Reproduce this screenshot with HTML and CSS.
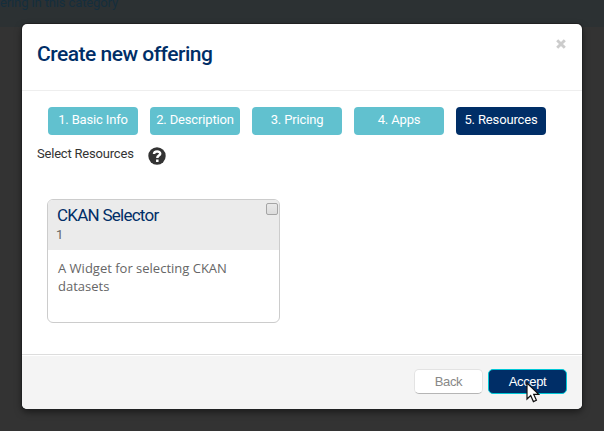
FILE: index.html
```html
<!DOCTYPE html>
<html lang="en">
<head>
<meta charset="utf-8">
<title>Create new offering</title>
<link rel="stylesheet" href="styles.css">
</head>
<body>
<div class="banner"><span class="banner-text">ering in this category</span></div>
<div class="modal">
  <header class="modal-header">
    <h3 class="title">Create new offering</h3>
    <svg class="close" viewBox="0 0 10 10"><path d="M1.2 1.2l7.6 7.6M8.8 1.2l-7.6 7.6"/></svg>
  </header>
  <main class="modal-body">
    <nav class="steps">
      <div class="step">1. Basic Info</div>
      <div class="step">2. Description</div>
      <div class="step">3. Pricing</div>
      <div class="step">4. Apps</div>
      <div class="step active">5. Resources</div>
    </nav>
    <div class="select-row">
      <span class="select-label">Select Resources</span>
      <svg class="help" viewBox="0 0 18 18"><circle cx="9" cy="9" r="8.7"/><path d="M6 7C6.1 3.7 12.2 3.6 12.2 6.7C12.2 8.7 9.3 8.5 9.3 11"/><path d="M9.3 12.4v2.5"/></svg>
    </div>
    <article class="card">
      <div class="card-head">
        <div>
          <h4 class="card-title">CKAN Selector</h4>
          <div class="version">1</div>
        </div>
        <span class="check"></span>
      </div>
      <p class="card-text">A Widget for selecting CKAN datasets</p>
    </article>
  </main>
  <footer class="modal-footer">
    <button class="btn back">Back</button>
    <button class="btn accept">Accept</button>
  </footer>
</div>
<svg class="cursor" viewBox="0 0 14 21"><path d="M1 1v16l3.7-3.5 2.7 6.1 3-1.3-2.7-6h5z"/></svg>
</body>
</html>
```
FILE: styles.css
```css
* { box-sizing: border-box; }
body {
  margin: 0;
  width: 604px;
  height: 431px;
  overflow: hidden;
  background: #333;
  font-family: Roboto, "Noto Sans", sans-serif;
}
h3, h4, p { margin: 0; font-weight: normal; }
.banner {
  height: 27px;
  background: #2c3133;
  color: #152e3d;
  font-size: 13px;
  line-height: 14px;
}
.banner-text { display: block; transform: translateY(-4px); letter-spacing: -0.12px; white-space: nowrap; }
.modal {
  position: absolute;
  left: 22px;
  top: 24px;
  width: 560px;
  height: 385px;
  display: flex;
  flex-direction: column;
  background: #fff;
  border-radius: 5px;
  box-shadow: 0 0 0 1px #202122, 0 3px 7px rgba(0, 0, 0, .5);
  overflow: hidden;
}
.modal-header {
  height: 67px;
  display: flex;
  justify-content: space-between;
  padding: 15px 16px 0 15px;
  border-bottom: 1px solid #eee;
}
.title { color: #002e67; font-size: 21px; line-height: 30px; font-weight: 500; letter-spacing: -0.5px; white-space: nowrap; }
.close { width: 10px; height: 10px; fill: none; stroke: #ccc; stroke-width: 2.9; }
.modal-body { flex: 1; padding: 16px 15px 0; }
.steps { display: flex; gap: 12px; margin-left: 11px; }
.step {
  width: 90px;
  height: 28px;
  border-radius: 4px;
  background: #61c1cf;
  color: #fff;
  font-size: 13px;
  line-height: 25px;
  letter-spacing: -0.15px;
  text-align: center;
  white-space: nowrap;
}
.active { background: #002e67; }
.select-row { display: flex; gap: 14px; margin-top: 9px; height: 24px; }
.select-label { width: 97px; color: #333; font-size: 13px; line-height: 19px; letter-spacing: -0.2px; white-space: nowrap; }
.help { width: 18px; height: 18px; margin-top: 3px; }
.help circle { fill: #333; }
.help path { fill: none; stroke: #fff; stroke-width: 2.5; }
.card {
  width: 233px;
  height: 124px;
  margin: 31px 0 0 10px;
  border: 1px solid #ccc;
  border-radius: 6px;
  overflow: hidden;
}
.card-head { height: 50px; display: flex; justify-content: space-between; padding: 3px 1px 0 9px; background: #ebebeb; }
.card-title { color: #002e67; font-size: 17px; line-height: 25px; letter-spacing: -0.75px; white-space: nowrap; }
.version { color: #666; font-size: 13px; line-height: 14px; margin-left: -1px; }
.check { width: 12px; height: 12px; border: 1px solid #a5a5a5; border-radius: 2px; background: linear-gradient(#e9e9e9, #dcdcdc); }
.card-text { padding: 9px 40px 0 10px; color: #666; font-family: "Open Sans", sans-serif; font-size: 13px; line-height: 18px; }
.modal-footer {
  height: 55px;
  display: flex;
  justify-content: flex-end;
  gap: 5px;
  padding: 14px 15px 0;
  background: #f4f4f4;
  border-top: 1px solid #ddd;
  box-shadow: inset 0 1px 0 #fff;
}
.btn { padding: 0; border-radius: 5px; font-family: "Liberation Sans", sans-serif; font-size: 13px; letter-spacing: -0.4px; line-height: 22px; }
.back { width: 69px; height: 25px; border: 1px solid #e3e3e3; border-bottom-color: #b5b5b5; background: #fff; color: #888; }
.accept { width: 79px; height: 25px; border: 1px solid #00c8d7; background: #002e67; color: #fff; }
.cursor { position: absolute; left: 526px; top: 382px; width: 14px; height: 21px; fill: #fff; stroke: #111; stroke-width: 1.2; }
```
